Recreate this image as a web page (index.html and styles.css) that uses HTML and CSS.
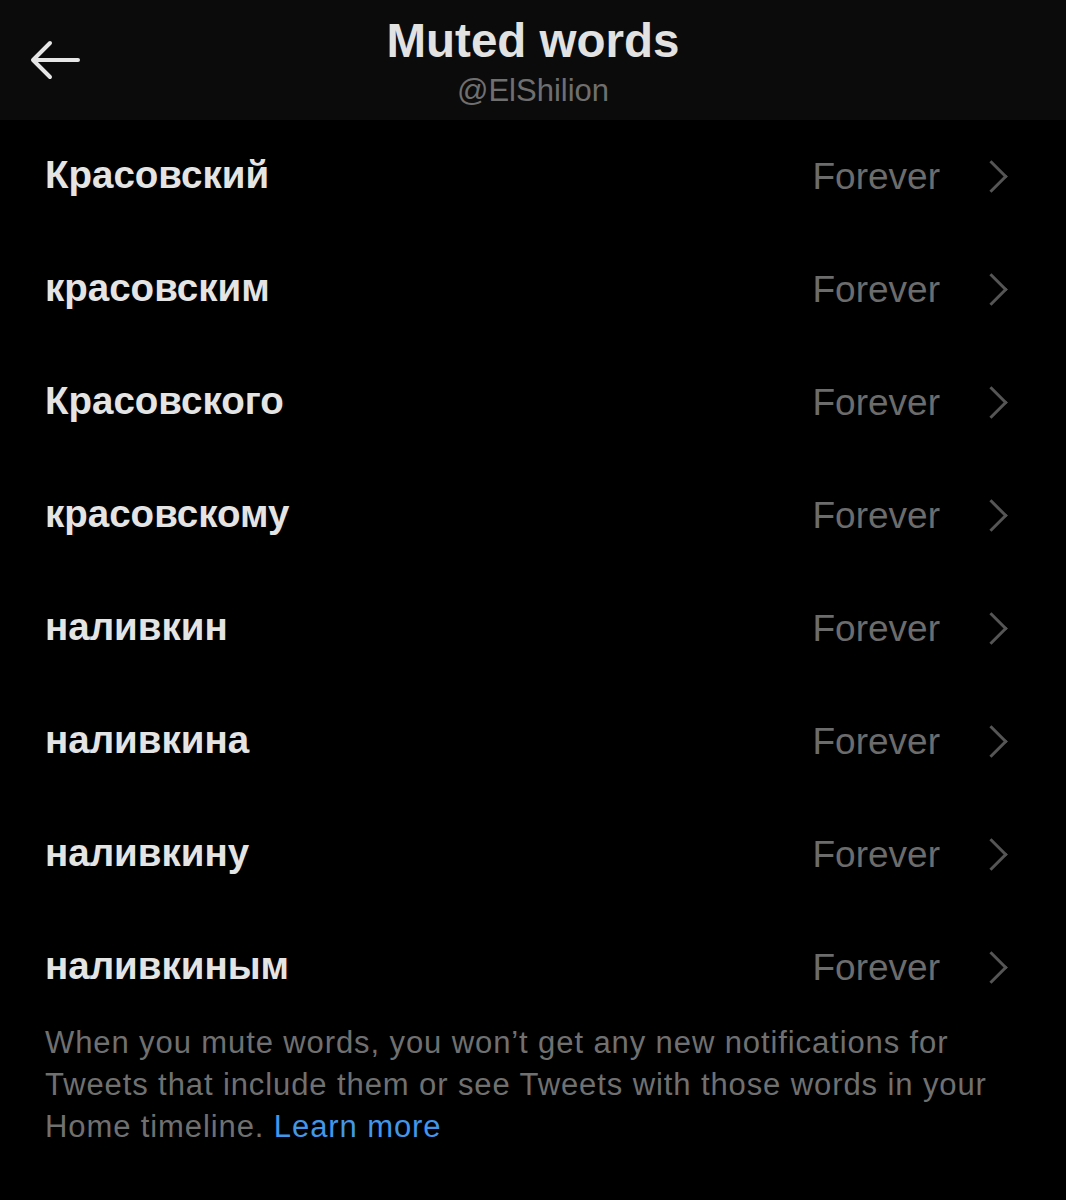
FILE: index.html
```html
<!DOCTYPE html>
<html lang="ru">

<head>
    <meta charset="UTF-8">
    <meta name="viewport" content="width=device-width, initial-scale=1.0">
    <title>Muted words</title>
    <link rel="stylesheet" href="styles.css">
</head>

<body>
    <div class="header">
        <a class="backBtn" href="#">
            <svg width="50" height="40" viewBox="0 0 50 40">
                <path d="M48 20 H4 M20 3 L3 20 L20 37" fill="none" stroke="#e6e6e6" stroke-width="4" stroke-linecap="round" stroke-linejoin="round"/>
            </svg>
        </a>
        <div class="titleBox">
            <h1>Muted words</h1>
            <div class="handle">@ElShilion</div>
        </div>
    </div>

    <ul class="wordList">
        <li><span class="word">Красовский</span><span class="period">Forever</span><span class="chev"></span></li>
        <li><span class="word">красовским</span><span class="period">Forever</span><span class="chev"></span></li>
        <li><span class="word">Красовского</span><span class="period">Forever</span><span class="chev"></span></li>
        <li><span class="word">красовскому</span><span class="period">Forever</span><span class="chev"></span></li>
        <li><span class="word">наливкин</span><span class="period">Forever</span><span class="chev"></span></li>
        <li><span class="word">наливкина</span><span class="period">Forever</span><span class="chev"></span></li>
        <li><span class="word">наливкину</span><span class="period">Forever</span><span class="chev"></span></li>
        <li><span class="word">наливкиным</span><span class="period">Forever</span><span class="chev"></span></li>
    </ul>

    <p class="note">
        When you mute words, you won’t get any new notifications for Tweets that include them or see Tweets with those words in your Home timeline. <a href="#">Learn more</a>
    </p>
</body>

</html>
```

FILE: styles.css
```css
body {
    margin: 0;
    background: #000;
    font-family: "Liberation Sans", Arial, sans-serif;
    color: #e4e4e4;
}
.header {
    height: 120px;
    background: #0b0b0b;
    display: flex;
    justify-content: center;
    align-items: flex-start;
    position: relative;
}
.backBtn {
    position: absolute;
    left: 30px;
    top: 40px;
    display: block;
}
.titleBox {
    text-align: center;
    padding-top: 13px;
}
.titleBox h1 {
    margin: 0;
    font-size: 47.5px;
    line-height: 56px;
    font-weight: bold;
    color: #e2e2e2;
}
.handle {
    font-size: 31px;
    line-height: 38px;
    margin-top: 3px;
    color: #6f6f6f;
}
.wordList {
    list-style: none;
    margin: 0;
    padding: 0;
}
.wordList li {
    height: 113px;
    display: flex;
    align-items: center;
    padding: 0 63px 0 45px;
}
.word {
    flex: 1;
    font-size: 38.5px;
    font-weight: bold;
    color: #e4e4e4;
    margin-top: -3px;
}
.period {
    font-size: 37px;
    color: #6c6c6c;
}
.chev {
    width: 20px;
    height: 20px;
    border-top: 3px solid #555;
    border-right: 3px solid #555;
    transform: rotate(45deg);
    margin-left: 40px;
}
.note {
    margin: -2px 0 0;
    padding: 0 45px;
    font-size: 31px;
    line-height: 42px;
    letter-spacing: 0.9px;
    color: #707070;
}
.note a {
    color: #4197e8;
    text-decoration: none;
}
```
